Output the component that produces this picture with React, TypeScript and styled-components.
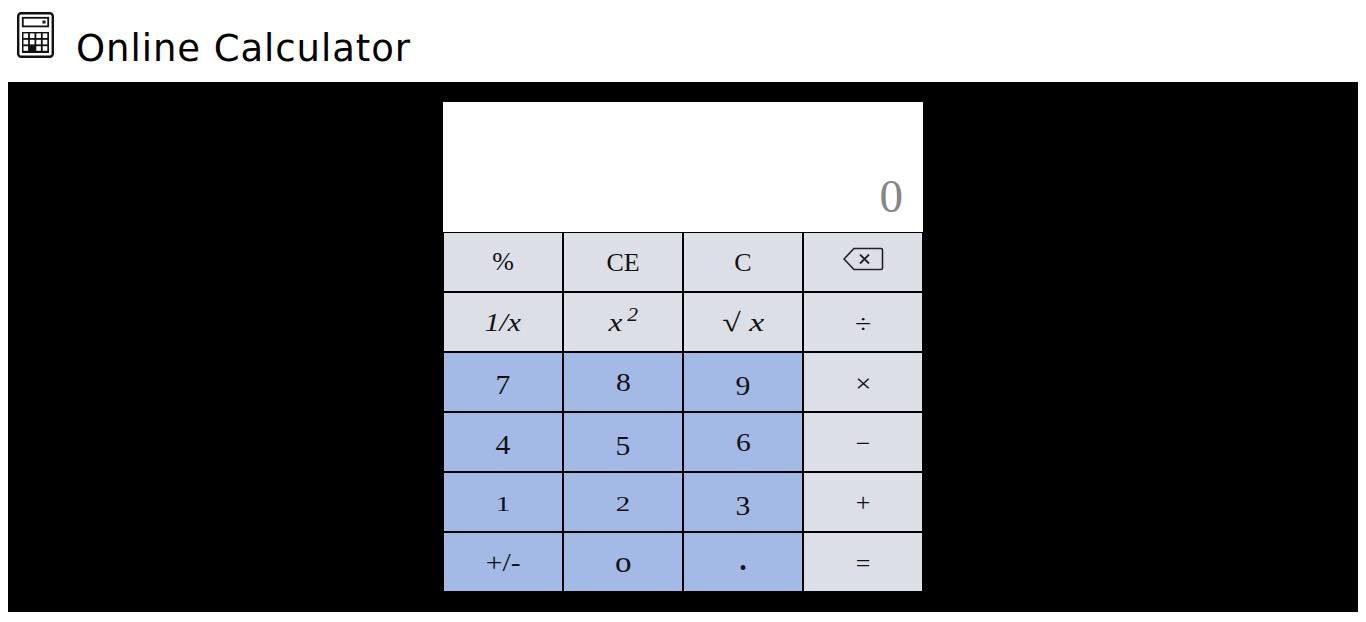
import React from "react";
import styled, { createGlobalStyle } from "styled-components";

const Global = createGlobalStyle`
  html, body { margin: 0; padding: 0; background: #fff; }
  body { margin: 8px; font-family: "Liberation Serif", serif; }
`;

const Header = styled.header`
  display: flex;
  align-items: flex-start;
  height: 74px;
  padding-left: 9px;
  gap: 21px;
`;

const Logo = styled.svg`
  width: 38px;
  height: 46px;
  margin-top: 4px;
  flex: none;
`;

const Title = styled.h1`
  margin: 20px 0 0;
  font: 400 37px/42px "DejaVu Sans", sans-serif;
  letter-spacing: 0.94px;
  color: #000;
  white-space: nowrap;
`;

const Stage = styled.main`
  background: #000;
  height: 530px;
  padding-top: 20px;
  box-sizing: border-box;
`;

const Calculator = styled.section`
  width: 480px;
  margin: 0 auto;
`;

const Display = styled.div`
  height: 130px;
  box-sizing: border-box;
  background: #fff;
  color: #868686;
  font: 400 47px/48px "Liberation Serif", serif;
  display: flex;
  align-items: flex-end;
  justify-content: flex-end;
  padding: 0 20px 12px 0;
`;

const Keys = styled.div`
  display: grid;
  grid-template-columns: repeat(4, 120px);
  grid-auto-rows: 60px;
`;

const Key = styled.button<{ $tone: "grey" | "blue" }>`
  appearance: none;
  border: 1px solid #000;
  border-radius: 0;
  margin: 0;
  padding: 0;
  display: flex;
  align-items: center;
  justify-content: center;
  background: ${(p) => (p.$tone === "blue" ? "#a2bae5" : "#dcdfe6")};
  color: #111;
  font: 400 26px/30px "Liberation Serif", serif;
`;

const Label = styled.span<{ $drop?: number; $size?: number; $italic?: boolean; $wide?: number }>`
  display: block;
  transform: translateY(${(p) => p.$drop ?? 0}px) scaleX(${(p) => p.$wide ?? 1.14});
  font-size: ${(p) => p.$size ?? 26}px;
  font-style: ${(p) => (p.$italic ? "italic" : "normal")};
  white-space: pre;
`;

const Sup = styled.sup`
  font-size: 18px;
  line-height: 0;
  margin-left: 4px;
`;

const BackspaceIcon = styled.svg`
  width: 42px;
  height: 26px;
  margin-top: -6px;
`;

type Item = {
  text?: React.ReactNode;
  tone: "grey" | "blue";
  drop?: number;
  size?: number;
  italic?: boolean;
  wide?: number;
  icon?: boolean;
};

const items: Item[] = [
  { text: "%", tone: "grey", wide: 1 },
  { text: "CE", tone: "grey", wide: 1, drop: 1 },
  { text: "C", tone: "grey", wide: 1, drop: 1 },
  { tone: "grey", icon: true },
  { text: "1/x", tone: "grey", italic: true, drop: 1 },
  { text: <>x<Sup>2</Sup></>, tone: "grey", italic: true, drop: 1, wide: 1.2 },
  { text: "√ x", tone: "grey", italic: true, drop: 1, wide: 1.3 },
  { text: "÷", tone: "grey", size: 26, drop: 3 },
  { text: "7", tone: "blue", size: 28, drop: 3, wide: 1.06 },
  { text: "8", tone: "blue", drop: 1 },
  { text: "9", tone: "blue", size: 28, drop: 4, wide: 1.06 },
  { text: "×", tone: "grey", size: 26, wide: 1.1, drop: 2 },
  { text: "4", tone: "blue", size: 28, drop: 3, wide: 1.06 },
  { text: "5", tone: "blue", size: 28, drop: 4, wide: 1.06 },
  { text: "6", tone: "blue", drop: 1 },
  { text: "−", tone: "grey", size: 26, wide: 1, drop: 2 },
  { text: "1", tone: "blue", size: 20, drop: 2, wide: 1.45 },
  { text: "2", tone: "blue", size: 20, drop: 2, wide: 1.45 },
  { text: "3", tone: "blue", size: 28, drop: 4, wide: 1.06 },
  { text: "+", tone: "grey", size: 26, wide: 1, drop: 1 },
  { text: "+/-", tone: "blue", drop: 1 },
  { text: "o", tone: "blue", size: 29, drop: 0 },
  { text: "•", tone: "blue", size: 20, drop: 6, wide: 1 },
  { text: "=", tone: "grey", size: 26, wide: 1, drop: 2 },
];

const cells: [number, number][] = [];
for (let r = 0; r < 3; r++) for (let c = 0; c < 4; c++) cells.push([c, r]);

export default function App() {
  return (
    <>
      <Global />
      <Header>
        <Logo viewBox="0 0 38 46" aria-hidden="true">
          <rect x="1.2" y="1.2" width="34.6" height="43.6" rx="3" fill="#fff" stroke="#111" strokeWidth="2.4" />
          <rect x="5.8" y="5.8" width="25.4" height="8.6" fill="none" stroke="#111" strokeWidth="1.8" />
          <rect x="25.5" y="8.5" width="3" height="3" fill="#111" />
          <rect x="5" y="20" width="27" height="21" fill="#111" />
          {cells.map(([c, r]) => (
            <rect
              key={`${c}-${r}`}
              x={6.5 + c * 6.4}
              y={21.4 + r * 6.4}
              width="4.6"
              height="4.6"
              fill={c === 1 && r === 2 ? "#111" : "#fff"}
            />
          ))}
        </Logo>
        <Title>Online Calculator</Title>
      </Header>
      <Stage>
        <Calculator>
          <Display>0</Display>
          <Keys>
            {items.map((k, i) => (
              <Key key={i} $tone={k.tone}>
                {k.icon ? (
                  <BackspaceIcon viewBox="0 0 42 26" aria-hidden="true">
                    <path
                      d="M12 2.5H39a1.5 1.5 0 0 1 1.5 1.5V22a1.5 1.5 0 0 1-1.5 1.5H12L2 13Z"
                      fill="none"
                      stroke="#222"
                      strokeWidth="1.6"
                      strokeLinejoin="round"
                    />
                    <path d="M18 8.5l9 9M27 8.5l-9 9" stroke="#222" strokeWidth="1.8" />
                  </BackspaceIcon>
                ) : (
                  <Label $drop={k.drop} $size={k.size} $italic={k.italic} $wide={k.wide}>
                    {k.text}
                  </Label>
                )}
              </Key>
            ))}
          </Keys>
        </Calculator>
      </Stage>
    </>
  );
}
